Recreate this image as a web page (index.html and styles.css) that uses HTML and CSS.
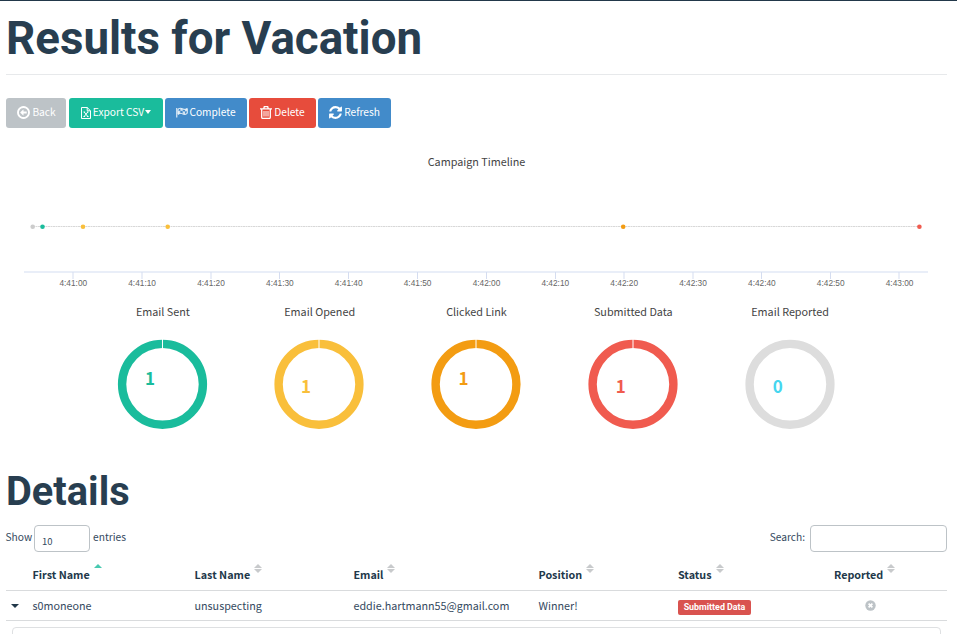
FILE: index.html
```html
<!DOCTYPE html>
<html lang="en">
<head>
<meta charset="utf-8">
<title>Results for Vacation</title>
<link rel="stylesheet" href="styles.css">
</head>
<body>
<main class="page">
  <h1 class="page-title"><span>Results for Vacation</span></h1>
  <div class="toolbar">
    <button class="btn back"><svg class="ico" width="15" height="15" viewBox="0 0 1792 1792"><path d="M1280 800v192q0 13-9.500 22.500t-22.500 9.500h-352v192q0 14-9 23t-23 9q-12 0-24-10l-319-319q-9-9-9-23t9-23l320-320q9-9 23-9 13 0 22.500 9.500t9.500 22.500v192h352q13 0 22.500 9.500t9.500 22.500zm160 96q0-148-73-273t-198-198-273-73-273 73-198 198-73 273 73 273 198 198 273 73 273-73 198-198 73-273zm224 0q0 209-103 385.500t-279.500 279.500-385.500 103-385.500-103-279.500-279.500-103-385.500 103-385.500 279.500-279.500 385.500-103 385.500 103 279.500 279.500 103 385.500z"/></svg><span>Back</span></button>
    <button class="btn export"><svg class="ico" width="10" height="12" viewBox="0 0 10 12"><path class="line" d="M.5.5h5.700l3.300 3.300v7.700h-9zM6.200.5v3.300h3.300M3.200 5l3.600 4.500M6.800 5l-3.600 4.500M2.500 5h1.600M5.900 5h1.600M2.500 9.500h1.600M5.900 9.500h1.600"/></svg><span>Export CSV</span><i class="caret"></i></button>
    <button class="btn complete"><svg class="ico" width="12" height="11" viewBox="0 0 12 11"><path d="M.3 1h1v9.500h-1z"/><path class="line" d="M2 2.200c2-1.400 3.400-.9 4.900-.2 1.600.7 3 .3 4.300-.5v5c-1.500.9-2.900 1.200-4.600.4-1.500-.7-2.900-.6-4.600.4z"/><path d="M2 4.200l2.300-.8V1.500l2.400.5v2.200l2.300.3V2.400l2.200-.8v2.200L9 4.500v2.600l-2.300-.3V4.300l-2.400-.7v2.600L2 7z" opacity=".75"/></svg><span>Complete</span></button>
    <button class="btn delete"><svg class="ico" width="12" height="13" viewBox="0 0 12 13"><path class="line thick" d="M0 2.900h12M3.700 2.700l.6-2h3.400l.6 2M1.700 3v8.300c0 .8.400 1.200 1.100 1.200h6.400c.7 0 1.100-.4 1.100-1.200V3"/><path class="line" d="M4 5v5.500M6 5v5.500M8 5v5.500"/></svg><span>Delete</span></button>
    <button class="btn refresh"><svg class="ico" width="15" height="15" viewBox="0 0 1792 1792"><path d="M1639 1056q0 5-1 7-64 268-268 434.500t-478 166.500q-146 0-282.500-55t-243.500-157l-129 129q-19 19-45 19t-45-19-19-45v-448q0-26 19-45t45-19h448q26 0 45 19t19 45-19 45l-137 137q71 66 161 102t187 36q134 0 250-65t186-179q11-17 53-117 8-23 30-23h192q13 0 22.500 9.500t9.500 22.500zm25-800v448q0 26-19 45t-45 19h-448q-26 0-45-19t-19-45 19-45l138-138q-148-137-349-137-134 0-250 65t-186 179q-11 17-53 117-8 23-30 23h-199q-13 0-22.500-9.500t-9.500-22.500v-7q65-268 270-434.500t480-166.500q146 0 284 55.500t245 156.500l130-129q19-19 45-19t45 19 19 45z"/></svg><span>Refresh</span></button>
  </div>
  <h2 class="chart-title timeline-title">Campaign Timeline</h2>
  <svg class="timeline" width="941" height="125" viewBox="6 172 941 125">
    <path d="M33 226.500H919" stroke="#d8d8d8" stroke-dasharray="2 .5"/>
    <path d="M24 272H928" stroke="#e2e8f6" stroke-width="1.500"/>
    <path d="M73 272v7M142 272v7M211 272v7M279.500 272v7M348.500 272v7M417.500 272v7M486.500 272v7M555.500 272v7M624 272v7M693 272v7M761.500 272v7M830.500 272v7M899 272v7" stroke="#d5ddf0"/>
    <g class="events"><circle cx="32.700" cy="226.700" r="2.300" fill="#ccc"/><circle cx="42.500" cy="226.700" r="2.300" fill="#1abc9c"/><circle cx="83" cy="226.700" r="2.300" fill="#f9bf3b"/><circle cx="167.700" cy="226.700" r="2.300" fill="#f9bf3b"/><circle cx="623.200" cy="226.700" r="2.300" fill="#f39c12"/><circle cx="919.400" cy="226.700" r="2.300" fill="#f05b4f"/></g>
    <g class="ticks"><text x="73.300" y="286">4:41:00</text><text x="142.100" y="286">4:41:10</text><text x="211" y="286">4:41:20</text><text x="279.900" y="286">4:41:30</text><text x="348.700" y="286">4:41:40</text><text x="417.600" y="286">4:41:50</text><text x="486.500" y="286">4:42:00</text><text x="555.300" y="286">4:42:10</text><text x="624.200" y="286">4:42:20</text><text x="693" y="286">4:42:30</text><text x="761.900" y="286">4:42:40</text><text x="830.700" y="286">4:42:50</text><text x="899.600" y="286">4:43:00</text></g>
  </svg>
  <div class="donuts">
    <section class="donut sent"><h2 class="chart-title">Email Sent</h2><svg width="92" height="92" viewBox="-46.500 -46.300 92 92"><circle r="40.400"/><path d="M0-45.500v9.500"/><text x="-12.500" y="1">1</text></svg></section>
    <section class="donut opened"><h2 class="chart-title">Email Opened</h2><svg width="92" height="92" viewBox="-46 -46.300 92 92"><circle r="40.400"/><path d="M0-45.500v9.500"/><text x="-13" y="9">1</text></svg></section>
    <section class="donut clicked"><h2 class="chart-title">Clicked Link</h2><svg width="92" height="92" viewBox="-46 -46.300 92 92"><circle r="40.400"/><path d="M0-45.500v9.500"/><text x="-12.500" y="1">1</text></svg></section>
    <section class="donut submitted"><h2 class="chart-title">Submitted Data</h2><svg width="92" height="92" viewBox="-46 -46.300 92 92"><circle r="40.400"/><path d="M0-45.500v9.500"/><text x="-12.300" y="9">1</text></svg></section>
    <section class="donut reported"><h2 class="chart-title">Email Reported</h2><svg width="92" height="92" viewBox="-46 -46.300 92 92"><circle r="40.400"/><text x="-12.300" y="9">0</text></svg></section>
  </div>
  <h1 class="details-title"><span>Details</span></h1>
  <div class="controls">
    <label class="length">Show <span class="field size">10</span> entries</label>
    <label class="search">Search: <input class="field query" type="text" aria-label="Search"></label>
  </div>
  <div class="table">
    <div class="row head">
      <span></span>
      <b>First Name<i class="sort asc"></i></b>
      <b>Last Name<i class="sort"></i></b>
      <b>Email<i class="sort"></i></b>
      <b>Position<i class="sort"></i></b>
      <b>Status<i class="sort"></i></b>
      <b>Reported<i class="sort"></i></b>
    </div>
    <div class="row body">
      <span><i class="caret dark"></i></span>
      <span>s0moneone</span>
      <span>unsuspecting</span>
      <span>eddie.hartmann55@gmail.com</span>
      <span>Winner!</span>
      <span><em class="label">Submitted Data</em></span>
      <span class="center"><svg width="11" height="11" viewBox="0 0 11 11"><circle cx="5.500" cy="5.500" r="5.200" fill="#bdc3c7"/><path d="M3.600 3.600l3.800 3.800M7.400 3.600L3.600 7.400" stroke="#fff" stroke-width="1.700"/></svg></span>
    </div>
  </div>
  <div class="detail-panel"></div>
</main>
</body>
</html>
```
FILE: styles.css
```css
* { box-sizing: border-box; }
html, body { height: 100%; }
body {
  margin: 0;
  overflow: hidden;
  background: #fff;
  color: #34495e;
  font-family: "Noto Sans CJK SC", sans-serif;
  font-size: 10.750px;
  line-height: 16px;
}
.page {
  display: flex;
  flex-direction: column;
  height: 634px;
  padding: 0 10px 0 6px;
  border-top: 1px solid #22384a;
  overflow: hidden;
}
h1, h2 { margin: 0; }
.page-title, .details-title {
  flex: none;
  font-family: Roboto, sans-serif;
  font-weight: 700;
  color: #283e50;
  white-space: nowrap;
}
.page-title {
  height: 74px;
  padding-top: 11px;
  border-bottom: 1px solid #e7e9eb;
  font-size: 45.700px;
  line-height: 54px;
}
.toolbar {
  display: flex;
  flex: none;
  gap: 2px;
  height: 30px;
  margin-top: 23px;
}
.btn {
  display: flex;
  align-items: center;
  justify-content: center;
  gap: 1px;
  height: 30px;
  padding: 0 0 1px;
  border: 0;
  border-radius: 3px;
  color: #fff;
  font: inherit;
  font-size: 10.200px;
  white-space: nowrap;
}
.btn span { margin-bottom: 2px; line-height: 16px; }
.back { width: 60px; margin-right: 1px; background: #bdc3c7; }
.export { width: 94px; background: #1abc9c; }
.complete { width: 82px; background: #428bca; }
.delete { width: 67px; gap: 2px; background: #e74c3c; }
.refresh { width: 73px; padding-right: 1px; background: #428bca; }
.ico { flex: none; fill: #fff; }
.ico .line { fill: none; stroke: #fff; stroke-width: 1; }
.ico .thick { stroke-width: 1.300; }
.export .ico { margin-right: 1px; }
.caret {
  width: 0;
  height: 0;
  border: 3.5px solid transparent;
  border-top: 4px solid currentColor;
  border-bottom: 0;
}
.export .caret { border-width: 4px 3.500px 0; margin-bottom: 1px; }
.caret.dark { display: block; margin: 13px 0 0 5px; border-width: 4px 4px 0; color: #22384a; }
.chart-title {
  color: #444;
  font-size: 10.800px;
  font-weight: 400;
  line-height: 16px;
  text-align: center;
}
.timeline-title { flex: none; margin-top: 25px; height: 19px; }
.timeline { flex: none; display: block; }
.ticks text { font: 8.300px "Liberation Sans", sans-serif; fill: #666; text-anchor: middle; }
.donuts {
  display: grid;
  grid-template-columns: repeat(5, 156.8px);
  justify-content: center;
  flex: none;
  height: 166px;
  padding-top: 6px;
}
.donut { display: flex; flex-direction: column; align-items: center; gap: 19px; }
.donut svg { display: block; margin-left: -1px; }
.donut circle { fill: none; stroke: currentColor; stroke-width: 8.400; }
.donut path { stroke: #fff; stroke-width: 1; }
.donut text { fill: currentColor; font: 700 17px "Noto Sans CJK SC", sans-serif; text-anchor: middle; }
.sent { color: #1abc9c; }
.opened { color: #f9bf3b; }
.clicked { color: #f39c12; }
.submitted { color: #f05b4f; }
.reported { color: #ddd; }
.reported text { fill: #45d6ef; }
.details-title { height: 62px; padding-top: 5px; font-size: 39.800px; line-height: 48px; }
.controls { display: flex; flex: none; justify-content: space-between; height: 27px; font-size: 10.200px; }
.controls label { display: flex; line-height: 23px; }
.field { height: 27px; border: 1px solid #bdc3c7; border-radius: 4px; background: #fff; }
.length { margin-left: -.5px; }
.size { width: 56px; margin: 0 3px 0 2px; padding: 4px 7px 0; font-size: 9.500px; }
.query { width: 137px; margin: 0 0 0 5px; }
.table { flex: none; margin-top: 8px; }
.row {
  display: grid;
  grid-template-columns: 26.500px 162px 159px 185px 139.500px 156px 1fr;
  height: 30px;
  border-bottom: 1px solid #d9dbdd;
}
.head { height: 31px; color: #22384a; }
.head b { display: flex; padding-top: 7px; }
.body > span { line-height: 29px; }
.sort { width: 8px; height: 10px; margin: -4px 0 0 4px; }
.sort::before, .sort::after { content: ""; display: block; border: 4px solid transparent; }
.sort::before { border-top: 0; border-bottom-color: #c8cacc; }
.sort::after { margin-top: 1px; border-bottom: 0; border-top-color: #c8cacc; }
.sort::before { margin-top: 1px; }
.sort.asc::before { border-bottom-color: #48c9b0; }
.sort.asc::after { visibility: hidden; }
.label {
  display: block;
  width: 73px;
  height: 15px;
  margin-top: 9px;
  border-radius: 2px;
  background: #d9534f;
  color: #fff;
  font: 700 8.900px/14px Roboto, sans-serif;
  text-align: center;
}
.center svg { display: block; margin: 9px 0 0 30.500px; }
.detail-panel {
  flex: none;
  height: 40px;
  margin: 6px 6px 0;
  border: 1px solid #dee0e2;
  border-radius: 4px;
}
```
